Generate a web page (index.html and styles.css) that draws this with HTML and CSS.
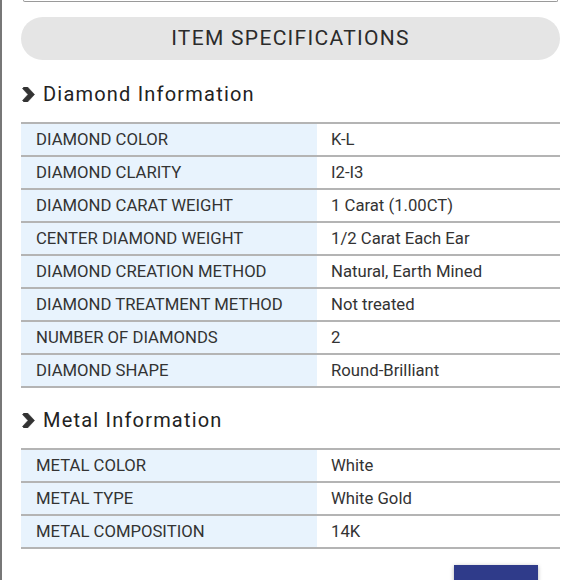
FILE: index.html
```html
<!DOCTYPE html>
<html>
<head>
<meta charset="utf-8">
<link rel="stylesheet" href="styles.css">
</head>
<body>
<div class="page">
  <div class="topbox"></div>
  <div class="pill">ITEM SPECIFICATIONS</div>

  <h2 class="heading">
    <svg class="chev" width="13" height="15" viewBox="0 0 13 15"><polygon points="0.5,1.5 2,0 5.5,0 12.5,7.5 5.5,15 2,15 0.5,13.5 6,7.5" fill="#333" stroke="#333" stroke-width="0.6" stroke-linejoin="round"/></svg>
    Diamond Information
  </h2>
  <div class="spec">
    <div class="row"><div class="k">DIAMOND COLOR</div><div class="v">K-L</div></div>
    <div class="row"><div class="k">DIAMOND CLARITY</div><div class="v">I2-I3</div></div>
    <div class="row"><div class="k">DIAMOND CARAT WEIGHT</div><div class="v">1 Carat (1.00CT)</div></div>
    <div class="row"><div class="k">CENTER DIAMOND WEIGHT</div><div class="v">1/2 Carat Each Ear</div></div>
    <div class="row"><div class="k">DIAMOND CREATION METHOD</div><div class="v">Natural, Earth Mined</div></div>
    <div class="row"><div class="k">DIAMOND TREATMENT METHOD</div><div class="v">Not treated</div></div>
    <div class="row"><div class="k">NUMBER OF DIAMONDS</div><div class="v">2</div></div>
    <div class="row"><div class="k">DIAMOND SHAPE</div><div class="v">Round-Brilliant</div></div>
  </div>

  <h2 class="heading metal">
    <svg class="chev" width="13" height="15" viewBox="0 0 13 15"><polygon points="0.5,1.5 2,0 5.5,0 12.5,7.5 5.5,15 2,15 0.5,13.5 6,7.5" fill="#333" stroke="#333" stroke-width="0.6" stroke-linejoin="round"/></svg>
    Metal Information
  </h2>
  <div class="spec">
    <div class="row"><div class="k">METAL COLOR</div><div class="v">White</div></div>
    <div class="row"><div class="k">METAL TYPE</div><div class="v">White Gold</div></div>
    <div class="row"><div class="k">METAL COMPOSITION</div><div class="v">14K</div></div>
  </div>

  <div class="btnrow"><div class="btn"></div></div>
</div>
</body>
</html>
```

FILE: styles.css
```css
html, body {
  margin: 0;
  padding: 0;
  background: #fff;
  height: 580px;
  overflow: hidden;
}
body {
  font-family: Roboto, "Liberation Sans", sans-serif;
  border-left: 2px solid #777;
  box-sizing: border-box;
}
.page {
  padding: 0 20px 0 19px;
}
.topbox {
  height: 1px;
  margin: 0 2px 0 2px;
  border: 1px solid #9a9a9a;
  border-top: none;
  border-radius: 0 0 6px 6px;
}
.pill {
  margin-top: 15px;
  height: 43px;
  border-radius: 22px;
  background: #e5e5e5;
  display: flex;
  align-items: center;
  justify-content: center;
  font-size: 21px;
  letter-spacing: 1.3px;
  color: #2b2b2b;
  padding-bottom: 2px;
  box-sizing: border-box;
}
.heading {
  margin: 19px 0 0 0;
  height: 30px;
  display: flex;
  align-items: center;
  gap: 8px;
  font-size: 20px;
  font-weight: 400;
  letter-spacing: 1.2px;
  color: #222;
  padding-left: 1px;
}
.heading.metal {
  margin-top: 17px;
}
.chev {
  flex: none;
}
.spec {
  margin-top: 13px;
  border-bottom: 2px solid #b4b4b4;
}
.row {
  display: flex;
  height: 31px;
  border-top: 2px solid #b4b4b4;
  font-size: 16.7px;
  color: #333;
  line-height: 31px;
}
.k {
  width: 281px;
  padding-left: 15px;
  background: #e8f3fd;
  flex: none;
}
.v {
  padding-left: 14px;
}
.btnrow {
  display: flex;
  justify-content: flex-end;
  padding-right: 22px;
  margin-top: 16px;
}
.btn {
  width: 84px;
  height: 30px;
  background: #2f3b8a;
  box-shadow: 0 1px 4px rgba(0,0,0,0.3);
}
```
